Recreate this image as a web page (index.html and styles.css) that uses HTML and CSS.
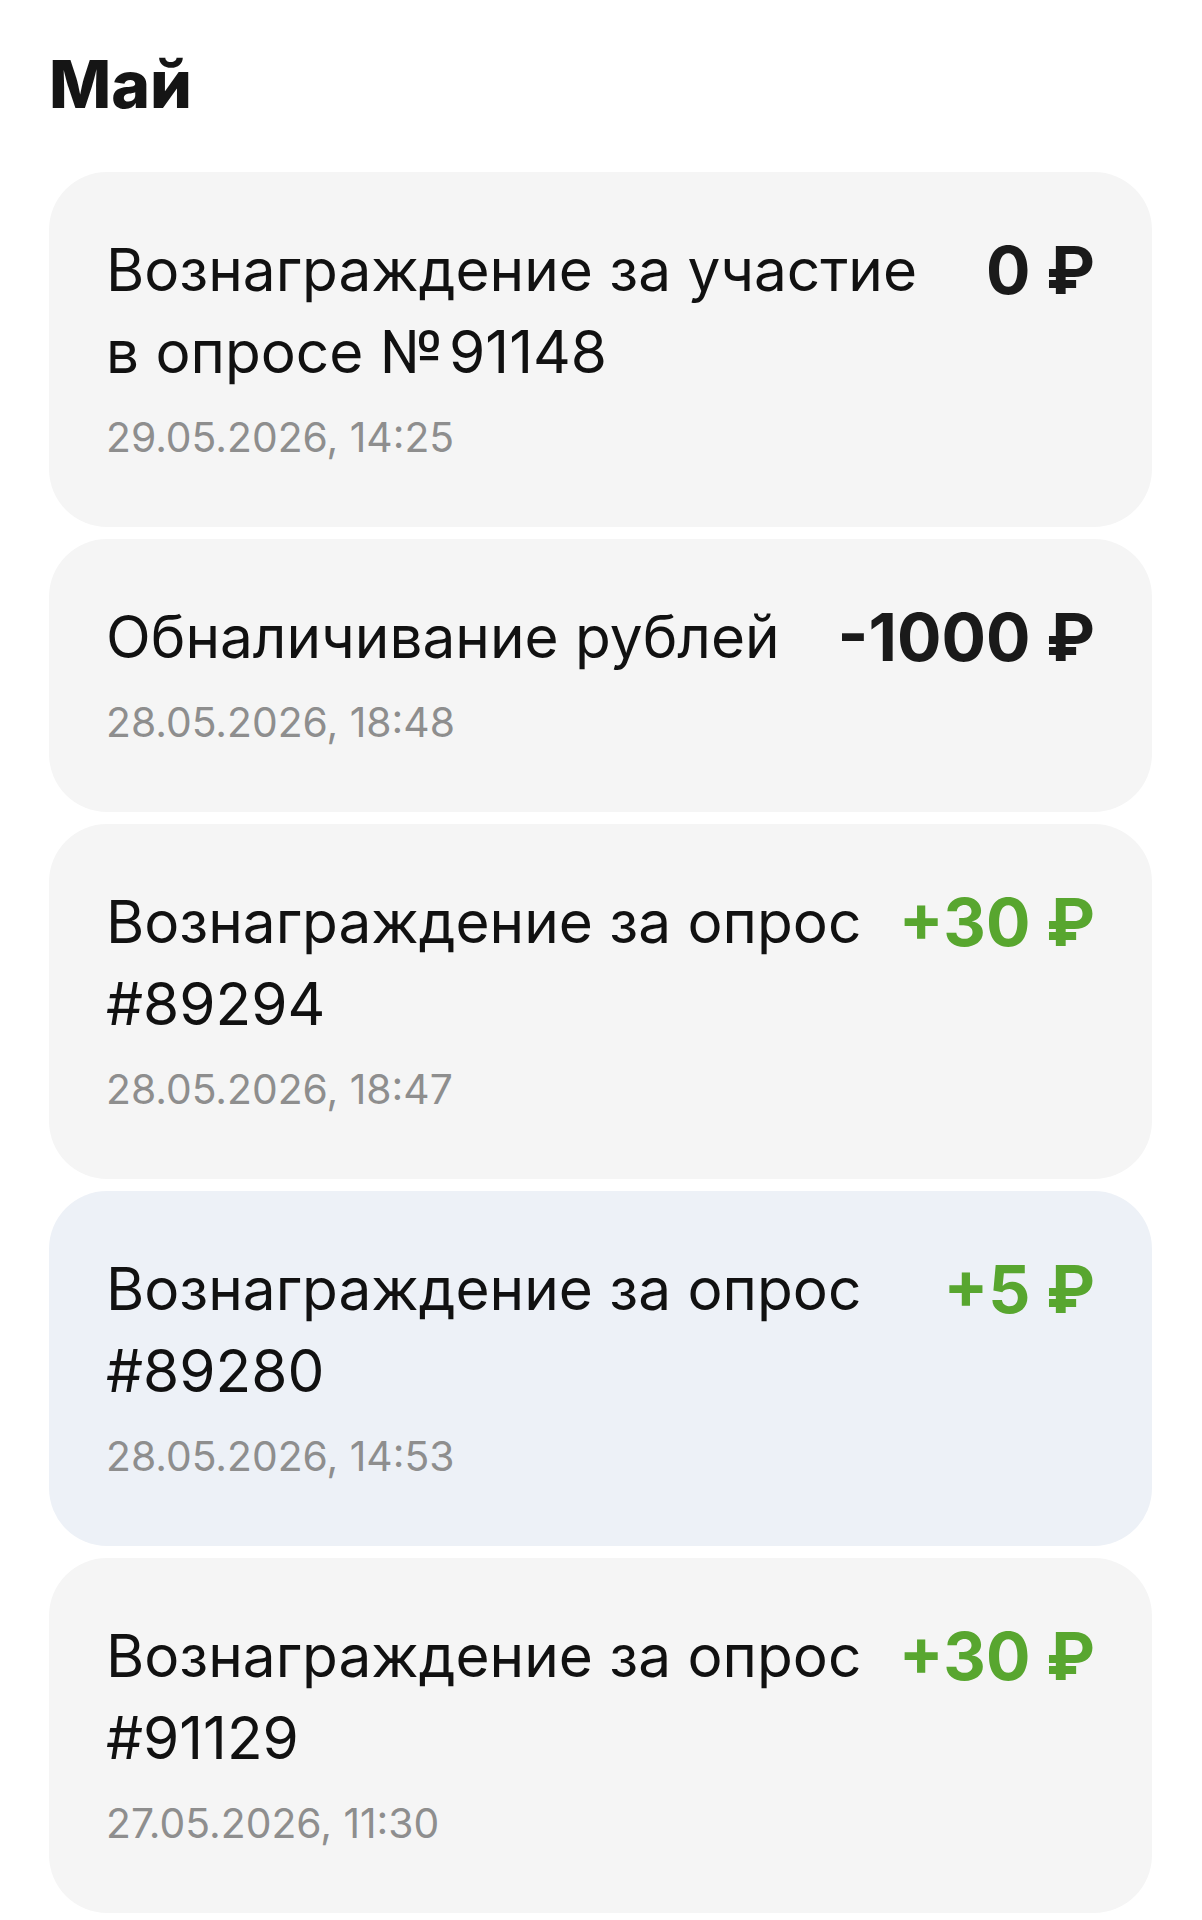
FILE: index.html
```html
<!DOCTYPE html>
<html lang="ru">
<head>
  <meta charset="UTF-8" />
  <meta name="viewport" content="width=device-width, initial-scale=1.0"/>
  <title>История операций</title>
  <link rel="stylesheet" href="styles.css">
</head>
<body>
  <div class="history">
    <!-- Month header -->
    <h1 class="month">Май</h1>

    <div class="ops">
      <div class="op">
        <div class="op-info">
          <div class="op-title">Вознаграждение за участие в опросе №&#8202;91148</div>
          <div class="op-date">29.05.2026, 14:25</div>
        </div>
        <div class="op-sum">0 ₽</div>
      </div>

      <div class="op">
        <div class="op-info">
          <div class="op-title">Обналичивание рублей</div>
          <div class="op-date">28.05.2026, 18:48</div>
        </div>
        <div class="op-sum">-1000 ₽</div>
      </div>

      <div class="op">
        <div class="op-info">
          <div class="op-title">Вознаграждение за опрос #89294</div>
          <div class="op-date">28.05.2026, 18:47</div>
        </div>
        <div class="op-sum plus">+30 ₽</div>
      </div>

      <div class="op selected">
        <div class="op-info">
          <div class="op-title">Вознаграждение за опрос #89280</div>
          <div class="op-date">28.05.2026, 14:53</div>
        </div>
        <div class="op-sum plus">+5 ₽</div>
      </div>

      <div class="op">
        <div class="op-info">
          <div class="op-title">Вознаграждение за опрос #91129</div>
          <div class="op-date">27.05.2026, 11:30</div>
        </div>
        <div class="op-sum plus">+30 ₽</div>
      </div>
    </div>
  </div>
</body>
</html>
```
FILE: styles.css
```css
body {
  font-family: Inter, "Noto Sans", sans-serif;
  margin: 0;
  padding: 0;
  background: #fff;
  color: #111;
  overflow: hidden;
}

.history {
  padding: 44px 50px 0 49px;
}

.month {
  margin: 0 0 48px;
  font-size: 66px;
  line-height: 80px;
  font-weight: 800;
  color: #151515;
}

/* Operation cards */
.ops {
  display: flex;
  flex-direction: column;
  gap: 12px;
}
.op {
  display: flex;
  align-items: flex-start;
  gap: 30px;
  padding: 57px 57px 62px 57px;
  background: #f5f5f5;
  border-radius: 58px;
}
.op.selected {
  background: #edf1f7;
}

.op-info {
  flex: 1;
  min-width: 0;
}
.op-title {
  font-size: 58.5px;
  line-height: 82px;
  font-weight: 400;
  color: #111;
}
.op-date {
  margin-top: 16px;
  font-size: 40.8px;
  line-height: 56px;
  color: #8e8e8e;
}

.op-sum {
  flex: none;
  white-space: nowrap;
  font-size: 66px;
  line-height: 82px;
  font-weight: 700;
  color: #1a1a1a;
}
.op-sum.plus {
  color: #58a62f;
}
```
